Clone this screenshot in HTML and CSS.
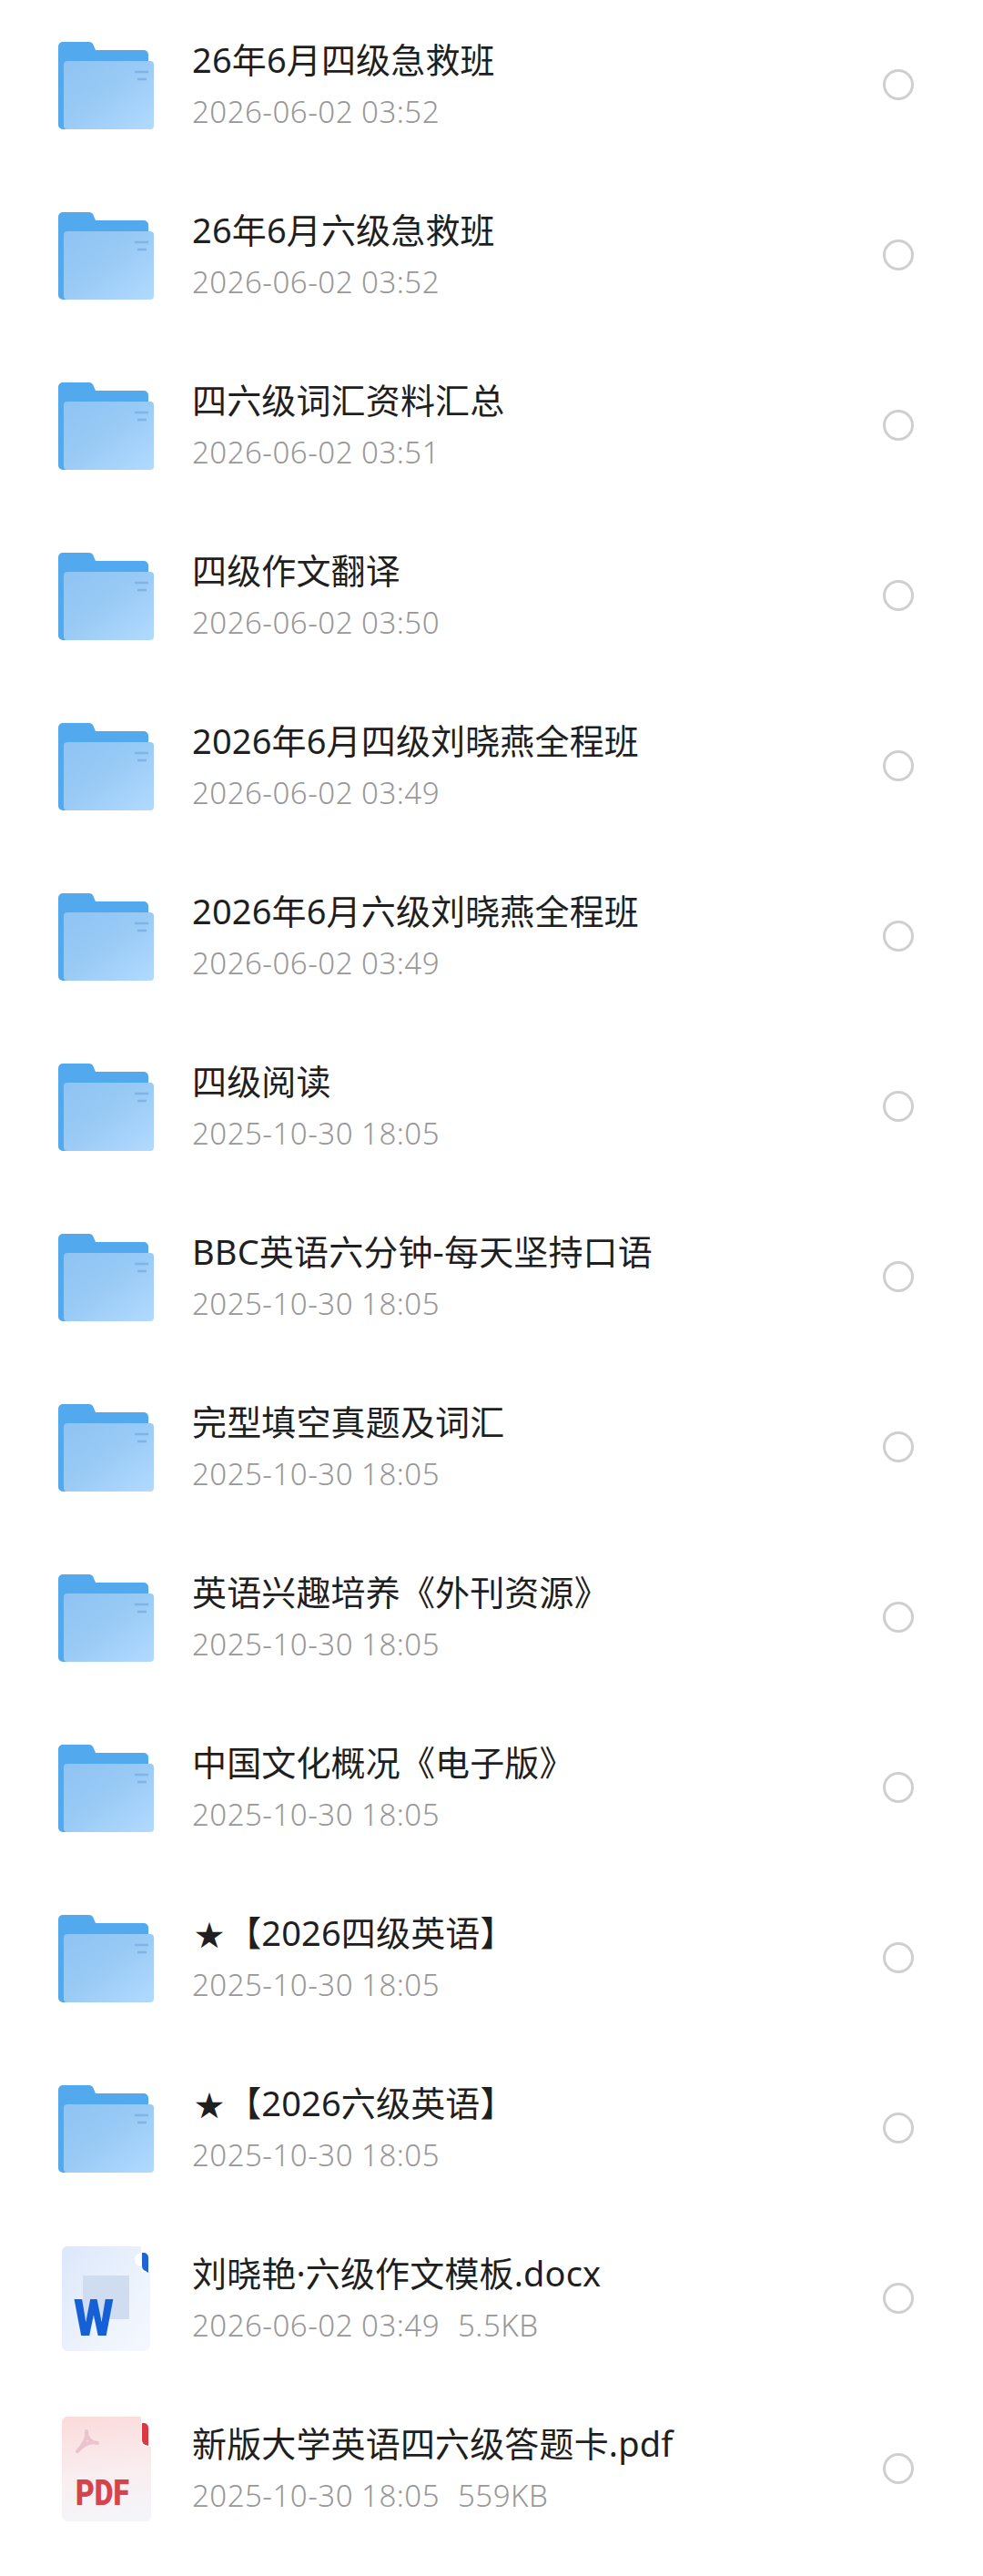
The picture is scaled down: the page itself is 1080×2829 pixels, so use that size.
FILE: index.html
```html
<!DOCTYPE html>
<html lang="zh-CN">
<head>
  <meta charset="UTF-8">
  <title>文件列表</title>
  <link rel="stylesheet" href="styles.css">
</head>
<body>

<svg class="defs" width="0" height="0">
  <defs>
    <linearGradient id="folderFront" x1="0" y1="0" x2="1" y2="1">
      <stop offset="0" stop-color="#8fc3f2"/>
      <stop offset="0.45" stop-color="#98caf5"/>
      <stop offset="1" stop-color="#b2daff"/>
    </linearGradient>
    <linearGradient id="wordPage" x1="0" y1="0" x2="1" y2="1">
      <stop offset="0" stop-color="#dbe7fb"/>
      <stop offset="0.6" stop-color="#edf3fd"/>
      <stop offset="1" stop-color="#f5f8fe"/>
    </linearGradient>
    <linearGradient id="pdfPage" x1="0.4" y1="0" x2="0.5" y2="1">
      <stop offset="0" stop-color="#fbdcdc"/>
      <stop offset="0.55" stop-color="#f9eef0"/>
      <stop offset="1" stop-color="#f4f5f9"/>
    </linearGradient>
    <symbol id="folder" viewBox="0 0 106 96">
      <path d="M0 5a5 5 0 0 1 5-5h29a5 5 0 0 1 4 2l3 7h53a5 5 0 0 1 5 5v77a5 5 0 0 1-5 5H5a5 5 0 0 1-5-5z" fill="#52a9ee"/>
      <rect x="6" y="21" width="99" height="75" rx="4" fill="url(#folderFront)"/>
      <path d="M84 33h15M87 41h10" stroke="#7fb5e6" stroke-width="2.5" fill="none"/>
    </symbol>
    <symbol id="word" viewBox="0 0 106 116">
      <path d="M10 1h81v7a6 6 0 0 0 1 15v6h9v81a6 6 0 0 1-6 6H10a6 6 0 0 1-6-6V7a6 6 0 0 1 6-6z" fill="url(#wordPage)"/>
      <rect x="27" y="33" width="51" height="48" fill="#d0dcef"/>
      <path d="M92 8h2a5 5 0 0 1 5 5v17l-3-2a6 6 0 0 1-4-5z" fill="#1f64d2"/>
      <text class="icon-letter word-letter" x="17" y="99" textLength="44" lengthAdjust="spacingAndGlyphs">W</text>
    </symbol>
    <symbol id="pdf" viewBox="0 0 106 116">
      <path d="M10 1h81v30l5 3h6v77a5 5 0 0 1-6 5H10a6 6 0 0 1-6-6V7a6 6 0 0 1 6-6z" fill="url(#pdfPage)"/>
      <path d="M92 8h2a5 5 0 0 1 5 5v20l-3-1a6 6 0 0 1-4-5z" fill="#dc3a42"/>
      <path d="M31 17C30 23 36 30 43 30C35 27 26 33 21 39C26 34 33 24 31 17z" fill="none" stroke="#e9c4cf" stroke-width="4" stroke-linejoin="round"/>
      <text class="icon-letter pdf-letter" x="19" y="98" textLength="59" lengthAdjust="spacingAndGlyphs">PDF</text>
    </symbol>
  </defs>
</svg>

<ul class="file-list">
  <li class="file-row">
    <svg class="file-icon"><use href="#folder"/></svg>
    <div class="file-info">
      <div class="file-name">26年6月四级急救班</div>
      <div class="file-meta">2026-06-02 03:52</div>
    </div>
    <span class="check"></span>
  </li>
  <li class="file-row">
    <svg class="file-icon"><use href="#folder"/></svg>
    <div class="file-info">
      <div class="file-name">26年6月六级急救班</div>
      <div class="file-meta">2026-06-02 03:52</div>
    </div>
    <span class="check"></span>
  </li>
  <li class="file-row">
    <svg class="file-icon"><use href="#folder"/></svg>
    <div class="file-info">
      <div class="file-name">四六级词汇资料汇总</div>
      <div class="file-meta">2026-06-02 03:51</div>
    </div>
    <span class="check"></span>
  </li>
  <li class="file-row">
    <svg class="file-icon"><use href="#folder"/></svg>
    <div class="file-info">
      <div class="file-name">四级作文翻译</div>
      <div class="file-meta">2026-06-02 03:50</div>
    </div>
    <span class="check"></span>
  </li>
  <li class="file-row">
    <svg class="file-icon"><use href="#folder"/></svg>
    <div class="file-info">
      <div class="file-name">2026年6月四级刘晓燕全程班</div>
      <div class="file-meta">2026-06-02 03:49</div>
    </div>
    <span class="check"></span>
  </li>
  <li class="file-row">
    <svg class="file-icon"><use href="#folder"/></svg>
    <div class="file-info">
      <div class="file-name">2026年6月六级刘晓燕全程班</div>
      <div class="file-meta">2026-06-02 03:49</div>
    </div>
    <span class="check"></span>
  </li>
  <li class="file-row">
    <svg class="file-icon"><use href="#folder"/></svg>
    <div class="file-info">
      <div class="file-name">四级阅读</div>
      <div class="file-meta">2025-10-30 18:05</div>
    </div>
    <span class="check"></span>
  </li>
  <li class="file-row">
    <svg class="file-icon"><use href="#folder"/></svg>
    <div class="file-info">
      <div class="file-name">BBC英语六分钟-每天坚持口语</div>
      <div class="file-meta">2025-10-30 18:05</div>
    </div>
    <span class="check"></span>
  </li>
  <li class="file-row">
    <svg class="file-icon"><use href="#folder"/></svg>
    <div class="file-info">
      <div class="file-name">完型填空真题及词汇</div>
      <div class="file-meta">2025-10-30 18:05</div>
    </div>
    <span class="check"></span>
  </li>
  <li class="file-row">
    <svg class="file-icon"><use href="#folder"/></svg>
    <div class="file-info">
      <div class="file-name">英语兴趣培养《外刊资源》</div>
      <div class="file-meta">2025-10-30 18:05</div>
    </div>
    <span class="check"></span>
  </li>
  <li class="file-row">
    <svg class="file-icon"><use href="#folder"/></svg>
    <div class="file-info">
      <div class="file-name">中国文化概况《电子版》</div>
      <div class="file-meta">2025-10-30 18:05</div>
    </div>
    <span class="check"></span>
  </li>
  <li class="file-row">
    <svg class="file-icon"><use href="#folder"/></svg>
    <div class="file-info">
      <div class="file-name"><span class="star">★</span>【2026四级英语】</div>
      <div class="file-meta">2025-10-30 18:05</div>
    </div>
    <span class="check"></span>
  </li>
  <li class="file-row">
    <svg class="file-icon"><use href="#folder"/></svg>
    <div class="file-info">
      <div class="file-name"><span class="star">★</span>【2026六级英语】</div>
      <div class="file-meta">2025-10-30 18:05</div>
    </div>
    <span class="check"></span>
  </li>
  <li class="file-row">
    <svg class="file-icon doc-icon"><use href="#word"/></svg>
    <div class="file-info">
      <div class="file-name">刘晓艳·六级作文模板.docx</div>
      <div class="file-meta"><span>2026-06-02 03:49</span><span>5.5KB</span></div>
    </div>
    <span class="check"></span>
  </li>
  <li class="file-row">
    <svg class="file-icon doc-icon"><use href="#pdf"/></svg>
    <div class="file-info">
      <div class="file-name">新版大学英语四六级答题卡.pdf</div>
      <div class="file-meta"><span>2025-10-30 18:05</span><span>559KB</span></div>
    </div>
    <span class="check"></span>
  </li>
</ul>

</body>
</html>
```

FILE: styles.css
```css
html, body {
  margin: 0;
  padding: 0;
  background: #fff;
}

body {
  width: 1080px;
  height: 2829px;
  overflow: hidden;
  font-family: "Noto Sans", "Noto Sans CJK SC", sans-serif;
}

.defs {
  position: absolute;
}

.file-list {
  list-style: none;
  margin: -1px 0 0;
  padding: 0;
}

.file-row {
  display: flex;
  align-items: center;
  height: 187px;
  padding: 0 76px 0 64px;
  box-sizing: border-box;
}

.file-icon {
  flex: none;
  width: 106px;
  height: 96px;
  margin: 3px 41px 0 0;
}

.doc-icon {
  height: 116px;
  margin-top: 0;
}

.icon-letter {
  font-family: "Roboto", sans-serif;
  font-weight: 900;
}

.word-letter {
  font-size: 55px;
  fill: #1560d6;
}

.pdf-letter {
  font-size: 38px;
  fill: #d6434a;
}

.file-info {
  flex: 1;
  min-width: 0;
}

.file-name {
  height: 48px;
  font-size: 38px;
  line-height: 48px;
  letter-spacing: 0.15px;
  color: #1f1f1f;
  margin-bottom: 12px;
  white-space: nowrap;
}

.star {
  font-size: 32px;
  line-height: 1;
  margin: 0 3px;
}

.file-meta {
  display: flex;
  gap: 20px;
  font-size: 33px;
  font-weight: 300;
  line-height: 44px;
  letter-spacing: 0.5px;
  color: #989898;
}

.check {
  flex: none;
  width: 34px;
  height: 34px;
  border: 3px solid #cfcfcf;
  border-radius: 50%;
  box-sizing: border-box;
}
```
